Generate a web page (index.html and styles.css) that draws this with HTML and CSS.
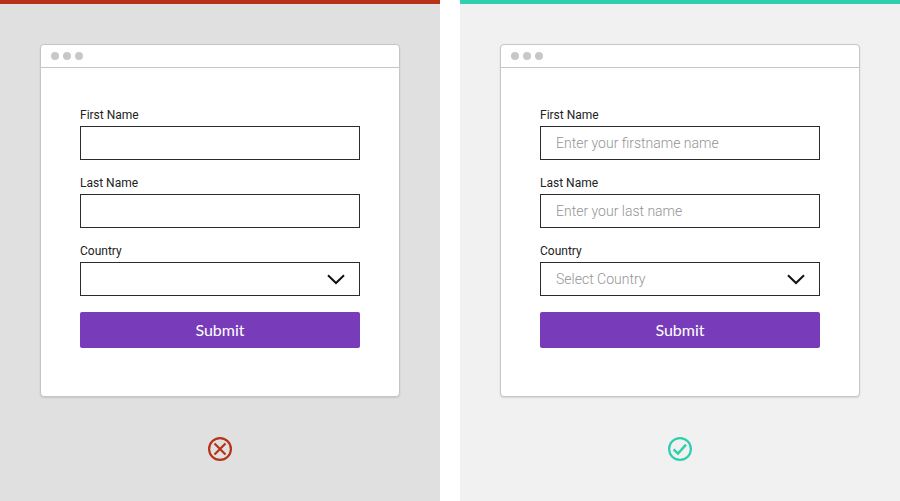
FILE: index.html
```html
<!DOCTYPE html>
<html lang="en">
<head>
  <meta charset="UTF-8">
  <meta name="viewport" content="width=device-width, initial-scale=1.0">
  <title>Form placeholders</title>
  <link rel="stylesheet" href="styles.css">
</head>
<body>
<div class="compare">

  <section class="panel panel-bad">
    <div class="card">
      <div class="card-bar"><i class="dot"></i><i class="dot"></i><i class="dot"></i></div>
      <form class="card-form">
        <div class="field">
          <label for="first-bad">First Name</label>
          <input type="text" id="first-bad">
        </div>
        <div class="field">
          <label for="last-bad">Last Name</label>
          <input type="text" id="last-bad">
        </div>
        <div class="field">
          <label for="country-bad">Country</label>
          <div class="select-wrap">
            <select id="country-bad"><option></option></select>
            <svg class="chevron" width="18" height="11" viewBox="0 0 18 11"><path d="M1 1.2 L9 9 L17 1.2" fill="none" stroke="#111" stroke-width="2"/></svg>
          </div>
        </div>
        <button type="button" class="submit-btn">Submit</button>
      </form>
    </div>
    <svg class="verdict" width="24" height="24" viewBox="0 0 24 24">
      <circle cx="12" cy="12" r="10.9" fill="none" stroke="#b63218" stroke-width="2.2"/>
      <path d="M6.5 6.5 L17.5 17.5 M17.5 6.5 L6.5 17.5" fill="none" stroke="#b63218" stroke-width="2.2"/>
    </svg>
  </section>

  <section class="panel panel-good">
    <div class="card">
      <div class="card-bar"><i class="dot"></i><i class="dot"></i><i class="dot"></i></div>
      <form class="card-form">
        <div class="field">
          <label for="first-good">First Name</label>
          <input type="text" id="first-good" placeholder="Enter your firstname name">
        </div>
        <div class="field">
          <label for="last-good">Last Name</label>
          <input type="text" id="last-good" placeholder="Enter your last name">
        </div>
        <div class="field">
          <label for="country-good">Country</label>
          <div class="select-wrap">
            <select id="country-good"><option>Select Country</option></select>
            <svg class="chevron" width="18" height="11" viewBox="0 0 18 11"><path d="M1 1.2 L9 9 L17 1.2" fill="none" stroke="#111" stroke-width="2"/></svg>
          </div>
        </div>
        <button type="button" class="submit-btn">Submit</button>
      </form>
    </div>
    <svg class="verdict" width="24" height="24" viewBox="0 0 24 24">
      <circle cx="12" cy="12" r="10.9" fill="none" stroke="#2ecfad" stroke-width="2.2"/>
      <path d="M5.6 12.4 L10 16.6 L18 7.6" fill="none" stroke="#2ecfad" stroke-width="2.4"/>
    </svg>
  </section>

</div>
</body>
</html>
```

FILE: styles.css
```css
body {
  margin: 0;
  background-color: #fff;
  font-family: Roboto, sans-serif;
}
.compare {
  display: flex;
  justify-content: space-between;
}
.panel {
  width: 440px;
  height: 501px;
  box-sizing: border-box;
  padding-top: 40px;
  display: flex;
  flex-direction: column;
  align-items: center;
}
.panel-bad {
  background-color: #e0e0e0;
  border-top: 4px solid #b63218;
}
.panel-good {
  background-color: #f1f1f1;
  border-top: 4px solid #2ecfad;
}
.card {
  width: 360px;
  box-sizing: border-box;
  background-color: #fff;
  border: 1px solid #c6c6c6;
  border-radius: 4px;
  box-shadow: 0 1px 2px rgba(0, 0, 0, 0.12);
}
.card-bar {
  height: 22px;
  border-bottom: 1px solid #c6c6c6;
  padding-left: 10px;
  display: flex;
  align-items: center;
  gap: 4px;
}
.dot {
  width: 8px;
  height: 8px;
  border-radius: 50%;
  background-color: #c8c8c8;
}
.card-form {
  padding: 40px 39px 48px;
}
.field {
  margin-bottom: 16px;
}
.field label {
  display: block;
  height: 14px;
  line-height: 14px;
  margin-bottom: 4px;
  font-size: 12px;
  color: #222;
}
.field input, .field select {
  display: block;
  width: 100%;
  height: 34px;
  box-sizing: border-box;
  margin: 0;
  padding: 0 15px;
  border: 1px solid #2b2b2b;
  border-radius: 0;
  outline: none;
  background-color: #fff;
  font-family: Roboto, sans-serif;
  font-weight: 300;
  font-size: 14px;
  color: #949494;
  appearance: none;
}
.field input::placeholder {
  color: #949494;
  opacity: 1;
}
.select-wrap {
  position: relative;
}
.chevron {
  position: absolute;
  right: 15px;
  top: 12px;
}
.submit-btn {
  display: block;
  width: 100%;
  height: 36px;
  padding: 0 0 2px;
  border: none;
  border-radius: 2px;
  background-color: #783cbb;
  color: #fff;
  font-family: Lato, sans-serif;
  font-size: 16px;
  cursor: pointer;
}
.verdict {
  margin-top: 40px;
}
```
